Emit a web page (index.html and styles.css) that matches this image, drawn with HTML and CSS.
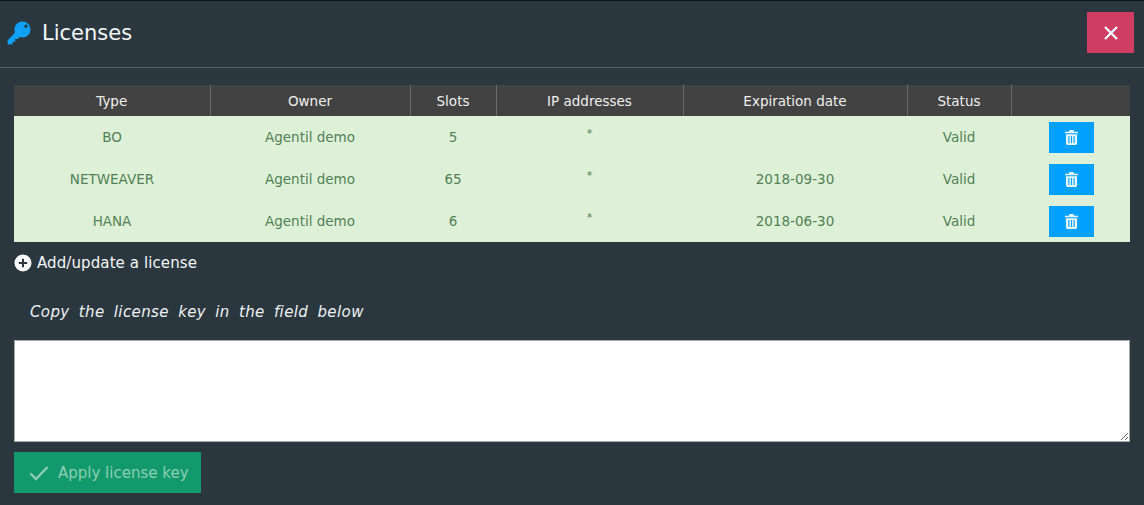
FILE: index.html
```html
<!DOCTYPE html>
<html lang="en">
<head>
  <meta charset="UTF-8" />
  <title>Licenses</title>
  <link rel="stylesheet" href="styles.css">
</head>
<body>
  <header class="modal-head">
    <h1>
      <svg class="key-icon" viewBox="0 0 24 24" width="24" height="24"><path fill="#0ea0f5" d="M15.5 0.5a8 8 0 0 1 0 16c-1 0-1.900-.2-2.800-.5l-2 2.100H8.200v2.600H5.600v2.500L0.800 23.500 0.500 19.500 8 11.600a8 8 0 0 1 7.500-11.100z"/><circle cx="19" cy="5.200" r="1.600" fill="#2b373f"/></svg>
      Licenses
    </h1>
    <button class="close-btn" aria-label="Close">
      <svg viewBox="0 0 14 14" width="14" height="14"><path d="M1 1l12 12M13 1L1 13" stroke="#fff" stroke-width="2.200" fill="none"/></svg>
    </button>
  </header>
  <main class="modal-body">
    <table class="licenses">
      <colgroup>
        <col class="c-type"><col class="c-owner"><col class="c-slots"><col class="c-ip"><col class="c-date"><col class="c-status"><col>
      </colgroup>
      <thead>
        <tr><th>Type</th><th>Owner</th><th>Slots</th><th>IP addresses</th><th>Expiration date</th><th>Status</th><th></th></tr>
      </thead>
      <tbody>
        <tr>
          <td>BO</td><td>Agentil demo</td><td>5</td><td class="ip">*</td><td></td><td>Valid</td>
          <td><button class="trash-btn" aria-label="Delete"><svg viewBox="0 0 14 16" width="13" height="15"><use href="#trash"/></svg></button></td>
        </tr>
        <tr>
          <td>NETWEAVER</td><td>Agentil demo</td><td>65</td><td class="ip">*</td><td>2018-09-30</td><td>Valid</td>
          <td><button class="trash-btn" aria-label="Delete"><svg viewBox="0 0 14 16" width="13" height="15"><use href="#trash"/></svg></button></td>
        </tr>
        <tr>
          <td>HANA</td><td>Agentil demo</td><td>6</td><td class="ip">*</td><td>2018-06-30</td><td>Valid</td>
          <td><button class="trash-btn" aria-label="Delete"><svg viewBox="0 0 14 16" width="13" height="15"><use href="#trash"/></svg></button></td>
        </tr>
      </tbody>
    </table>

    <div class="add-link">
      <svg viewBox="0 0 18 18" width="18" height="18"><circle cx="9" cy="9" r="8.500" fill="#fff"/><path d="M9 4.800v8.400M4.800 9h8.400" stroke="#2b373f" stroke-width="2"/></svg>
      Add/update a license
    </div>
    <p class="hint">Copy the license key in the field below</p>
    <textarea class="key-field"></textarea>
    <button class="apply-btn">
      <svg viewBox="0 0 20 16" width="20" height="16"><path d="M1.500 8.500l5.500 5.500L18.500 2" stroke="#8fcdb3" stroke-width="2.400" fill="none"/></svg>
      Apply license key
    </button>
  </main>

  <svg class="defs" width="0" height="0">
    <symbol id="trash" viewBox="0 0 14 16">
      <path fill="#fff" fill-opacity="0.9" fill-rule="evenodd" d="M5 0h4l1 1.800h4v1.700H0V1.800h4zM1 4.500h12V14.500a1.500 1.500 0 0 1-1.500 1.500h-9A1.500 1.500 0 0 1 1 14.500zM3.600 6.500v7.500h1.200V6.500zM6.400 6.500v7.500h1.200V6.500zM9.200 6.500v7.500h1.200V6.500z"/>
    </symbol>
  </svg>
</body>
</html>
```

FILE: styles.css
```css
html, body {
  height: 100%;
}
body {
  margin: 0;
  background-color: #2b373f;
  color: #fff;
  font-family: "DejaVu Sans", sans-serif;
  font-size: 13px;
  border-top: 1px solid #0c1114;
  box-sizing: border-box;
  overflow: hidden;
}
.modal-head {
  display: flex;
  justify-content: space-between;
  align-items: center;
  height: 66px;
  padding: 0 10px 0 7px;
  border-bottom: 1px solid #56636b;
}
.modal-head h1 {
  display: flex;
  align-items: center;
  gap: 11px;
  margin: -2px 0 0;
  font-size: 21px;
  font-weight: normal;
  color: #f2f6f8;
}
.close-btn {
  display: flex;
  align-items: center;
  justify-content: center;
  width: 47px;
  height: 41px;
  margin-top: -3px;
  padding: 0;
  border: none;
  background-color: #cf3d63;
}
.modal-body {
  padding: 17px 14px 0;
}
.licenses {
  width: 100%;
  table-layout: fixed;
  border-collapse: collapse;
}
.c-type { width: 196px; }
.c-owner { width: 200px; }
.c-slots { width: 86px; }
.c-ip { width: 187px; }
.c-date { width: 224px; }
.c-status { width: 104px; }
.licenses th {
  height: 31px;
  padding: 0;
  background-color: #424242;
  border-left: 1px solid #6a6a6a;
  color: #f0f0f0;
  font-size: 13.5px;
  font-weight: normal;
}
.licenses th:first-child {
  border-left: none;
}
.licenses td {
  box-sizing: border-box;
  height: 42px;
  padding: 0;
  background-color: #dff0d8;
  color: #4f8254;
  text-align: center;
  font-size: 13.5px;
}
.licenses td.ip {
  padding-bottom: 8px;
  font-size: 11px;
}
.trash-btn {
  display: inline-flex;
  align-items: center;
  justify-content: center;
  width: 45px;
  height: 31px;
  margin-left: 1px;
  padding: 0;
  border: none;
  background-color: #00a0ff;
  vertical-align: middle;
}
.add-link {
  display: flex;
  align-items: center;
  gap: 5px;
  margin-top: 12px;
  height: 18px;
  font-size: 15px;
  letter-spacing: 0.1px;
  color: #f4f6f7;
}
.hint {
  margin: 31px 0 0 16px;
  height: 18px;
  line-height: 18px;
  font-size: 15px;
  font-style: italic;
  color: #eef1f2;
  letter-spacing: 0.4px;
  word-spacing: 4px;
}
.key-field {
  display: block;
  width: 100%;
  height: 102px;
  margin-top: 19px;
  padding: 4px;
  box-sizing: border-box;
  border: 1px solid #a9a9a9;
  border-radius: 0;
  background-color: #fff;
}
.apply-btn {
  display: flex;
  align-items: center;
  gap: 9px;
  height: 41px;
  width: 187px;
  margin-top: 10px;
  padding: 0 0 0 15px;
  border: none;
  background-color: #129a6c;
  color: #8fcdb3;
  font-family: inherit;
  font-size: 15px;
}
.defs {
  position: absolute;
}
```
